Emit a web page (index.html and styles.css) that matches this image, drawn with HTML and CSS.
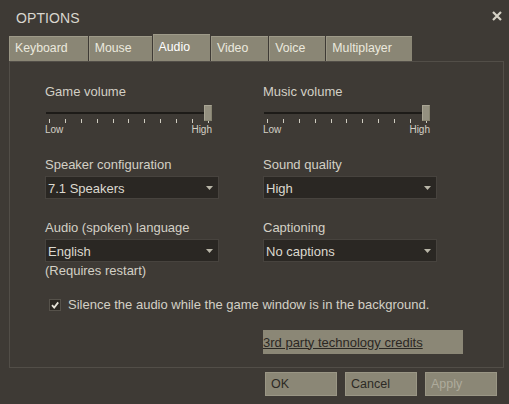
FILE: index.html
```html
<!DOCTYPE html>
<html>
<head>
<meta charset="utf-8">
<link rel="stylesheet" href="styles.css">
</head>
<body>
<div class="dialog">
  <header class="titlebar">
    <span class="title">OPTIONS</span>
    <span class="close"><svg width="10" height="10" viewBox="0 0 10 10"><path d="M1 1 L9 9 M9 1 L1 9" stroke="#d6d2c6" stroke-width="2.2" fill="none"/></svg></span>
  </header>
  <nav class="tabs">
    <span class="tab">Keyboard</span>
    <span class="tab">Mouse</span>
    <span class="tab active">Audio</span>
    <span class="tab">Video</span>
    <span class="tab">Voice</span>
    <span class="tab">Multiplayer</span>
  </nav>
  <section class="panel">
    <div class="grid">
      <div class="field">
        <div class="label">Game volume</div>
        <div class="slider">
          <div class="track"></div>
          <div class="ticks"><i></i><i></i><i></i><i></i><i></i><i></i><i></i><i></i><i></i><i></i><i></i></div>
          <div class="scale"><span>Low</span><span>High</span></div>
          <div class="thumb"></div>
        </div>
      </div>
      <div class="field">
        <div class="label">Music volume</div>
        <div class="slider">
          <div class="track"></div>
          <div class="ticks"><i></i><i></i><i></i><i></i><i></i><i></i><i></i><i></i><i></i><i></i><i></i></div>
          <div class="scale"><span>Low</span><span>High</span></div>
          <div class="thumb"></div>
        </div>
      </div>
      <div class="field">
        <div class="label">Speaker configuration</div>
        <div class="select"><span>7.1 Speakers</span><svg width="7" height="4" viewBox="0 0 7 4"><path d="M0 0 H7 L3.5 4 Z" fill="#b9b6a8"/></svg></div>
      </div>
      <div class="field">
        <div class="label">Sound quality</div>
        <div class="select"><span>High</span><svg width="7" height="4" viewBox="0 0 7 4"><path d="M0 0 H7 L3.5 4 Z" fill="#b9b6a8"/></svg></div>
      </div>
      <div class="field">
        <div class="label">Audio (spoken) language</div>
        <div class="select"><span>English</span><svg width="7" height="4" viewBox="0 0 7 4"><path d="M0 0 H7 L3.5 4 Z" fill="#b9b6a8"/></svg></div>
        <div class="note">(Requires restart)</div>
      </div>
      <div class="field">
        <div class="label">Captioning</div>
        <div class="select"><span>No captions</span><svg width="7" height="4" viewBox="0 0 7 4"><path d="M0 0 H7 L3.5 4 Z" fill="#b9b6a8"/></svg></div>
      </div>
    </div>
    <div class="check">
      <span class="box"><svg width="10" height="10" viewBox="0 0 10 10"><path d="M2 5.2 L4.2 7.6 L8.2 2.4" stroke="#e6e3da" stroke-width="1.8" fill="none"/></svg></span>
      <span>Silence the audio while the game window is in the background.</span>
    </div>
    <div class="credits-row">
      <span class="credits">3rd party technology credits</span>
    </div>
  </section>
  <footer class="buttons">
    <span class="btn">OK</span>
    <span class="btn">Cancel</span>
    <span class="btn disabled">Apply</span>
  </footer>
</div>
</body>
</html>
```
FILE: styles.css
```css
html, body {
  margin: 0;
  padding: 0;
}
body {
  width: 509px;
  height: 404px;
  overflow: hidden;
  background: #3e3a35;
  font-family: "Liberation Sans", Arial, sans-serif;
  font-size: 13px;
  color: #d3d0c5;
}
.dialog {
  padding: 0 5px 0 9px;
}
.titlebar {
  height: 34px;
  display: flex;
  align-items: center;
  justify-content: space-between;
  padding: 1px 2px 0 7px;
  box-sizing: border-box;
}
.title {
  font-size: 14px;
  line-height: 16px;
  color: #d9d6ce;
  letter-spacing: 0.1px;
}
.close {
  display: flex;
  width: 10px;
  height: 10px;
  margin-top: -3px;
}
.tabs {
  display: flex;
  align-items: flex-end;
  height: 27px;
}
.tab {
  display: block;
  box-sizing: border-box;
  height: 25px;
  padding: 4px 20px 0 5px;
  margin-right: 1px;
  font-size: 12.3px;
  line-height: 14px;
  background: #8a8675;
  border-top: 1px solid #9e9a89;
  border-left: 1px solid #9a9685;
  color: #ebe9de;
}
.tab.active {
  height: 27px;
  padding-top: 5px;
  color: #ffffff;
  background: #8c8877;
}
.panel {
  box-sizing: border-box;
  height: 307px;
  border: 1px solid #524e48;
  padding: 22px 0 0 35px;
}
.grid {
  display: grid;
  grid-template-columns: 174px 174px;
  column-gap: 44px;
  row-gap: 21px;
}
.label, .note {
  line-height: 15px;
}
.slider {
  position: relative;
  width: 168px;
  margin-top: 6px;
  padding: 7px 0 1px;
}
.track {
  height: 2px;
  margin: 0 4px 0 1px;
  background: #1d1b18;
}
.ticks {
  display: flex;
  justify-content: space-between;
  height: 4px;
  margin-top: 5px;
  padding: 0 4px 0 4px;
}
.ticks i {
  width: 1px;
  height: 4px;
  background: #cfccc1;
}
.scale {
  display: flex;
  justify-content: space-between;
  font-size: 10px;
  line-height: 11px;
  margin-top: 1px;
  padding-right: 1px;
}
.thumb {
  position: absolute;
  top: 0;
  left: 159px;
  width: 8px;
  height: 16px;
  box-sizing: border-box;
  background: #949080;
  border: 1px solid #a9a594;
  border-right-color: #85826f;
  border-bottom-color: #85826f;
}
.select {
  box-sizing: border-box;
  height: 23px;
  margin-top: 4px;
  display: flex;
  align-items: center;
  justify-content: space-between;
  padding: 1px 5px 0 2px;
  background: #2a2723;
  border: 1px solid #47433e;
  color: #dcd9cf;
}
.note {
  margin-top: 1px;
}
.check {
  display: flex;
  align-items: center;
  height: 15px;
  margin: 19px 0 0 4px;
  line-height: 15px;
}
.box {
  box-sizing: border-box;
  width: 12px;
  height: 12px;
  margin-right: 7px;
  display: flex;
  align-items: center;
  justify-content: center;
  background: #2a2723;
  border: 1px solid #56524b;
}
.credits-row {
  display: flex;
  margin: 18px 0 0 218px;
}
.credits {
  width: 200px;
  height: 24px;
  display: flex;
  align-items: center;
  background: #8b8776;
  color: #2b2824;
  text-decoration: underline;
}
.buttons {
  display: flex;
  justify-content: flex-end;
  gap: 8px;
  margin: 4px 7px 0 0;
}
.btn {
  box-sizing: border-box;
  width: 72px;
  height: 24px;
  display: flex;
  align-items: center;
  padding-left: 5px;
  background: #8b8776;
  border: 1px solid #9a9685;
  color: #2d2a25;
  font-size: 12.5px;
}
.btn.disabled {
  color: #aeab9c;
}
```
